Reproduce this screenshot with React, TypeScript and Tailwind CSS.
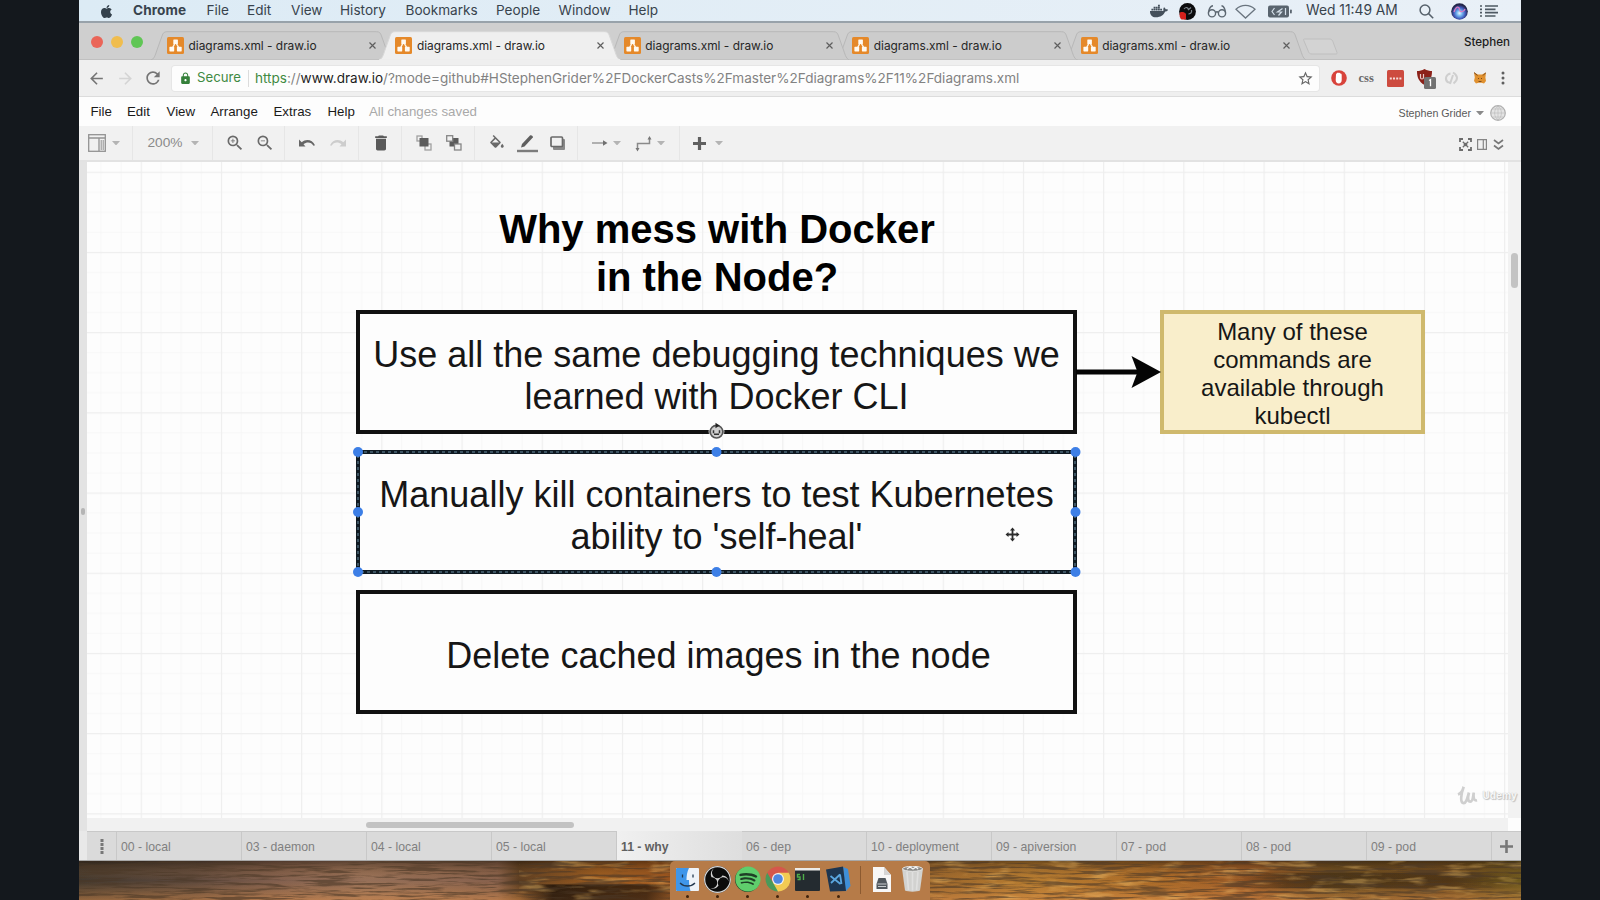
import type { ReactNode } from 'react';
import { FaApple, FaDocker, FaSpotify } from 'react-icons/fa';
import { SiObsstudio } from 'react-icons/si';
import {
  MdArrowBack,
  MdArrowForward,
  MdDelete,
  MdFormatColorFill,
  MdLock,
  MdRefresh,
  MdStarBorder,
  MdZoomIn,
  MdZoomOut,
} from 'react-icons/md';

/* ---------- macOS menu bar ---------- */

const systemMenus = [
  { label: 'Chrome', cls: 'w-[73.5px] font-bold tracking-[0.1px]' },
  { label: 'File', cls: 'w-[40.5px]' },
  { label: 'Edit', cls: 'w-[44px]' },
  { label: 'View', cls: 'w-[49px]' },
  { label: 'History', cls: 'w-[65.5px]' },
  { label: 'Bookmarks', cls: 'w-[90.5px]' },
  { label: 'People', cls: 'w-[62.5px]' },
  { label: 'Window', cls: 'w-[70px]' },
  { label: 'Help', cls: 'w-[40px]' },
];

function SystemBar() {
  return (
    <div className="flex h-[23px] shrink-0 items-center border-b-2 border-[#98a2aa] bg-linear-to-r from-[#dcebf5] to-[#e9f0f7] pt-px text-[13.6px] leading-none text-[#38434d]">
      <FaApple className="ml-[20px] mr-[19px] size-[15px] text-[#34414c]" />
      <div className="flex flex-1">
        {systemMenus.map((m) => (
          <span key={m.label} className={m.cls}>
            {m.label}
          </span>
        ))}
      </div>
      <FaDocker className="mr-[11px] size-[18px] text-[#44505b]" />
      <svg className="mr-[11px] size-[17px]" viewBox="0 0 17 17">
        <circle cx="8.5" cy="8.5" r="8.4" fill="#0c0c0e" />
        <path d="M5 6c2-2.500 4-1.500 4.500.5M12.500 7c.5 2.500-.8 4-3 3.800M9 7l3-2.500" fill="none" stroke="#7d858c" strokeWidth="1.200" />
        <path d="M1 9.500c2-1 4.500-.5 6 1.500v5.600H2.500C.5 15 .2 12 1 9.500z" fill="#d5201c" />
      </svg>
      <svg className="mr-[8px] h-[14px] w-[20px]" viewBox="0 0 20 14" fill="none" stroke="#5c6771" strokeWidth="1.400">
        <circle cx="5" cy="9.300" r="3.600" />
        <circle cx="15" cy="9.300" r="3.600" />
        <path d="M8.500 8.600c.8-.8 2.200-.8 3 0M1.400 8.500C2 5 3.500 2 6 1.800M18.600 8.500C18 5 16.500 2 14.500 1.800" />
      </svg>
      <svg className="mr-[12px] h-[15px] w-[21px]" viewBox="0 0 21 15" fill="none" stroke="#6a757f" strokeWidth="1.300">
        <path d="M1 5.200C6.500.2 14.500.2 20 5.200L10.500 14z" />
      </svg>
      <svg className="mr-[14px] h-[13px] w-[24px]" viewBox="0 0 24 13">
        <rect x="0" y="0.500" width="21" height="12" rx="2" fill="#59646e" />
        <rect x="22" y="4.500" width="1.800" height="4" rx="0.800" fill="#59646e" />
        <path d="M6.500 3L4 6.500 6.500 10M14.500 3.500L9.500 7h4l-3 3.500M17.500 3v7" fill="none" stroke="#d5e0ea" strokeWidth="1.200" />
      </svg>
      <span className="w-[92px] whitespace-nowrap text-[13.8px]">Wed 11:49 AM</span>
      <svg className="ml-[21px] size-[15px]" viewBox="0 0 15 15" fill="none" stroke="#56616b" strokeWidth="1.500">
        <circle cx="6" cy="6" r="4.900" />
        <path d="M9.600 9.600L14.200 14.200" />
      </svg>
      <svg className="ml-[17px] size-[17px]" viewBox="0 0 17 17">
        <defs>
          <radialGradient id="siri" cx="0.5" cy="0.6" r="0.5">
            <stop offset="0" stopColor="#e9f8ff" />
            <stop offset="0.35" stopColor="#6fb0ee" />
            <stop offset="0.7" stopColor="#3f56b8" />
            <stop offset="1" stopColor="#23264a" />
          </radialGradient>
        </defs>
        <circle cx="8.500" cy="8.500" r="8.300" fill="url(#siri)" />
        <path d="M3 9c2-6 5-6 5.500-2.500S13 9 14 6" fill="none" stroke="#d67ac0" strokeWidth="1.300" />
      </svg>
      <svg className="ml-[12px] mr-[22px] h-[12px] w-[19px]" viewBox="0 0 19 12" fill="none" stroke="#4e5963" strokeWidth="1.700">
        <path d="M5 1h13M5 4.300h10.500M5 7.600h13M5 11h10.500M0 1h2M0 4.300h2M0 7.600h2M0 11h2" />
      </svg>
    </div>
  );
}

/* ---------- Chrome tab strip ---------- */

const browserTabs = [
  { id: 1, z: 'z-[5]', active: false },
  { id: 2, z: 'z-[9]', active: true },
  { id: 3, z: 'z-[4]', active: false },
  { id: 4, z: 'z-[3]', active: false },
  { id: 5, z: 'z-[2]', active: false },
];

function DrawioIcon() {
  return (
    <svg className="size-[17px] shrink-0" viewBox="0 0 17 17">
      <rect width="17" height="17" rx="1.500" fill="#e5892a" />
      <path d="M8.500 5L5 12M8.500 5l4 7" stroke="#fdf3e4" strokeWidth="1.500" />
      <rect x="6.300" y="2.500" width="4.600" height="4.600" rx="0.600" fill="#fffaf2" />
      <rect x="2.400" y="9.800" width="4.800" height="4.600" rx="0.600" fill="#fffaf2" />
      <rect x="9.900" y="9.800" width="4.800" height="4.600" rx="0.600" fill="#fffaf2" />
    </svg>
  );
}

function BrowserTab({ z, active }: { z: string; active: boolean }) {
  return (
    <div className={`relative mr-[-13.1px] flex h-[29px] w-[241.5px] shrink-0 items-center pl-4 ${z}`}>
      <svg className="absolute inset-0 h-full w-full" viewBox="0 0 241.500 29" preserveAspectRatio="none">
        <path
          d="M0 29C3 28 4 25 6 19L11 5C12 2 13 .7 16 .7H225.500C228.500 .7 229.500 2 230.500 5L235.500 19C237.500 25 238.500 28 241.500 29Z"
          fill={active ? '#efefef' : '#cccccc'}
          stroke={active ? '#d8d8d8' : '#b8b8b8'}
          strokeWidth="1"
        />
        {active && <rect x="0.500" y="28.200" width="240.500" height="1" fill="#efefef" />}
      </svg>
      <div className="relative flex items-center">
        <DrawioIcon />
        <span className="ml-[4.5px] w-[132px] whitespace-nowrap text-[11.9px] text-[#262626]">diagrams.xml - draw.io</span>
        <svg className="ml-[48.5px] size-[7px]" viewBox="0 0 7 7" stroke="#5e5e5e" strokeWidth="1.200">
          <path d="M.5.500l6 6M6.500.500l-6 6" />
        </svg>
      </div>
    </div>
  );
}

function TabStrip() {
  return (
    <div className="flex h-[37px] shrink-0 items-end border-b border-[#c0c0c0] bg-[#cfcfcf]">
      <div className="flex h-full w-[72px] items-center gap-[8px] pl-[11.5px] pt-[1px]">
        <span className="size-[12px] rounded-full bg-[#ea6558]" />
        <span className="size-[12px] rounded-full bg-[#f0bd4e]" />
        <span className="size-[12px] rounded-full bg-[#60c655]" />
      </div>
      <div className="isolate -mb-px flex">
        {browserTabs.map((t) => (
          <BrowserTab key={t.id} z={t.z} active={t.active} />
        ))}
      </div>
      <svg className="mb-[4px] ml-[9px] h-[17px] w-[36px]" viewBox="0 0 36 17">
        <path d="M2.500 1h24.500c2 0 3 .5 3.800 2.300L35 14.500c.3 1-.2 1.500-1 1.500H10c-2 0-2.800-.6-3.500-2.300L1.800 2.500C1.400 1.500 1.600 1 2.500 1z" fill="#d3d3d3" stroke="#bfbfbf" />
      </svg>
      <span className="mb-[10px] ml-auto mr-[11px] text-[11.6px] font-medium leading-none text-[#1c1c1c]">Stephen</span>
    </div>
  );
}

/* ---------- Chrome address bar ---------- */

function AddressBar() {
  return (
    <div className="flex h-[37px] shrink-0 items-center border-b border-[#dcdcdc] bg-[#efefef]">
      <MdArrowBack className="ml-[8px] size-[19px] text-[#757575]" />
      <MdArrowForward className="ml-[10px] size-[19px] text-[#d4d4d4]" />
      <MdRefresh className="ml-[8px] size-[20px] text-[#757575]" />
      <div className="ml-[9px] flex h-[25px] w-[1147px] items-center rounded-[3px] bg-[#fdfdfd] shadow-[0_0_0_1px_#e6e6e6]">
        <MdLock className="ml-[7px] size-[13px] text-[#35803a]" />
        <span className="ml-[5px] w-[44px] text-[13.2px] text-[#3f8a42]">Secure</span>
        <span className="ml-[7px] h-[17px] w-px bg-[#dcdcdc]" />
        <span className="ml-[6px] flex-1 whitespace-nowrap text-[13.54px] text-[#828282]">
          <span className="text-[#3f8a42]">https</span>://<span className="text-[#1d1d1d]">www.draw.io</span>
          /?mode=github#HStephenGrider%2FDockerCasts%2Fmaster%2Fdiagrams%2F11%2Fdiagrams.xml
        </span>
        <MdStarBorder className="mr-[5px] size-[17px] text-[#666]" />
      </div>
      <svg className="ml-[11.5px] size-[16px]" viewBox="0 0 16 16">
        <circle cx="8" cy="8" r="7.800" fill="#d8433b" />
        <path d="M5 4.500c0-1 1-1 1.200-1.500.4-.8 1.300-.6 1.500 0 .9-.4 1.300 0 1.500.6.800 0 1.500.5 1.500 1.200v5.200c0 2.300-1.200 3.500-3 3.500S4.700 12 4.700 10z" fill="#fff" />
      </svg>
      <span className="ml-[12px] w-[17px] font-['Liberation_Serif',serif] text-[12.5px] font-bold leading-none text-[#6a6a6a]">css</span>
      <svg className="ml-[11px] size-[17px]" viewBox="0 0 17 17">
        <rect width="17" height="17" rx="1.500" fill="#cd4b3f" />
        <path d="M2.800 8.500h2M6 8.500h2M9.200 8.500h2M12.400 8.500h2" stroke="#f6dcd9" strokeWidth="2" />
      </svg>
      <svg className="ml-[12px] mt-[3px] h-[21px] w-[20px]" viewBox="0 0 20 21">
        <path d="M8.500 0C6 1.500 3.500 2 1 2c0 6 1.500 10.500 7.500 14C14.500 12.500 16 8 16 2c-2.500 0-5-.5-7.500-2z" fill="#8c2119" />
        <path d="M4.500 5v3.500c0 2 3 2 3 0V5" fill="none" stroke="#e9c9c6" strokeWidth="1.200" />
        <rect x="8" y="8" width="12" height="12" rx="1.500" fill="#727272" />
        <path d="M13 11.500l1.500-.8v6.500" fill="none" stroke="#fff" strokeWidth="1.300" />
      </svg>
      <svg className="ml-[8px] h-[15px] w-[15px]" viewBox="0 0 15 15" fill="none" stroke="#cfcfcf" strokeWidth="2">
        <path d="M6.500 2.500C2 3.500.5 8 3.500 11l2 .5M9 1.500c5 3 5.500 7 .5 11M6 13l3-9" />
      </svg>
      <svg className="ml-[15px] h-[12px] w-[12px]" viewBox="0 0 12 12">
        <path d="M0 .5l4 2h4l4-2-.6 5L12 9l-2 2.500-2.500-.8h-3L2 11.500 0 9l.8-3.500z" fill="#e0912f" />
        <path d="M4 6l1 1M8 6L7 7M0 .5l3.500 3M12 .5l-3 3M4.500 9.500h3" stroke="#7e4a1d" strokeWidth="1" />
      </svg>
      <svg className="ml-[15px] h-[14px] w-[4px]" viewBox="0 0 4 14" fill="#5e5e5e">
        <circle cx="2" cy="2" r="1.500" />
        <circle cx="2" cy="7" r="1.500" />
        <circle cx="2" cy="12" r="1.500" />
      </svg>
    </div>
  );
}

/* ---------- draw.io menu and toolbar ---------- */

const editorMenus = [
  { label: 'File', cls: 'w-[36.5px]' },
  { label: 'Edit', cls: 'w-[39.5px]' },
  { label: 'View', cls: 'w-[44px]' },
  { label: 'Arrange', cls: 'w-[63px]' },
  { label: 'Extras', cls: 'w-[54px]' },
  { label: 'Help', cls: 'w-[41.5px]' },
];

function EditorMenu() {
  return (
    <div className="flex h-[29px] shrink-0 items-center bg-[#fdfdfd] pl-[11.5px] font-['Liberation_Sans',sans-serif] text-[13.3px] leading-none text-[#1a1a1a]">
      {editorMenus.map((m) => (
        <span key={m.label} className={m.cls}>
          {m.label}
        </span>
      ))}
      <span className="text-[#a9a9a9]">All changes saved</span>
      <span className="ml-auto mr-[5px] mt-[3px] text-[10.7px] text-[#5a5a5a]">Stephen Grider</span>
      <Caret cls="mt-[3px] fill-[#8a8a8a]" />
      <svg className="ml-[6px] mr-[15px] mt-[2px] size-[16px]" viewBox="0 0 16 16" fill="none" stroke="#b0b0b0">
        <circle cx="8" cy="8" r="7.300" fill="#e4e4e4" strokeWidth="1.200" />
        <path d="M8 1v14M1 8h14M2.500 4h11M2.500 12h11M8 1C3.500 4 3.500 12 8 15M8 1c4.500 3 4.500 11 0 14" strokeWidth="0.500" />
      </svg>
    </div>
  );
}

function Caret({ cls = 'fill-[#b4b4b4]' }: { cls?: string }) {
  return (
    <svg className={`h-[4.5px] w-[8px] shrink-0 ${cls}`} viewBox="0 0 8 4.500">
      <path d="M0 0h8L4 4.500z" />
    </svg>
  );
}

function Group({ cls, children }: { cls: string; children: ReactNode }) {
  return <div className={`flex h-full shrink-0 items-center border-r border-[#e6e6e6] ${cls}`}>{children}</div>;
}

function EditorToolbar() {
  return (
    <div className="flex h-[36px] shrink-0 items-center border-b-2 border-[#e2e2e2] bg-[#f1f1f1] text-[#6a6a6a]">
      <Group cls="w-[54px] gap-[6px] pl-[9px]">
        <svg className="size-[18px]" viewBox="0 0 18 18" fill="none" stroke="#929292" strokeWidth="1.300">
          <rect x="0.700" y="0.700" width="16.600" height="16.600" />
          <path d="M.7 4h16.600M11 4v13" />
          <path d="M13.200 6v10M15.200 6v10" strokeWidth="1" />
        </svg>
        <Caret />
      </Group>
      <Group cls="w-[80px] pl-[14.5px]">
        <span className="w-[43px] font-['Liberation_Sans',sans-serif] text-[13.7px] leading-none text-[#8a8a8a]">200%</span>
        <Caret />
      </Group>
      <Group cls="w-[72px] gap-[10.5px] pl-[11.5px]">
        <MdZoomIn className="size-[20px]" />
        <MdZoomOut className="size-[20px]" />
      </Group>
      <Group cls="w-[74px] gap-[15px] pl-[14px]">
        <svg className="h-[8px] w-[16px]" viewBox="0 0 16 8">
          <path d="M0 .5v7h6.500L4.500 5.200C8 2.300 12.500 3 14.500 6.800l1.500-.6C13.500.8 7.300-.6 2.700 3.200z" fill="#666" />
        </svg>
        <svg className="h-[8px] w-[16px] -scale-x-100" viewBox="0 0 16 8">
          <path d="M0 .5v7h6.500L4.500 5.200C8 2.300 12.500 3 14.500 6.800l1.500-.6C13.500.8 7.300-.6 2.700 3.200z" fill="#cdcdcd" />
        </svg>
      </Group>
      <Group cls="w-[43px] pl-[12px]">
        <MdDelete className="size-[20px] text-[#5a5a5a]" />
      </Group>
      <Group cls="w-[73px] gap-[14px] pl-[14px]">
        <svg className="size-[16px]" viewBox="0 0 16 16">
          <rect x="9" y="9" width="6" height="6" fill="none" stroke="#a0a0a0" strokeWidth="1.300" />
          <rect x="1" y="1" width="5" height="5" fill="none" stroke="#a0a0a0" strokeWidth="1.300" />
          <rect x="3.500" y="3" width="9" height="8.500" fill="#5c5c5c" />
        </svg>
        <svg className="size-[16px]" viewBox="0 0 16 16">
          <rect x="3.500" y="3" width="9" height="8.500" fill="#5c5c5c" />
          <rect x="0.700" y="0.700" width="6" height="5.500" fill="#f1f1f1" stroke="#868686" strokeWidth="1.300" />
          <rect x="8.500" y="9" width="6.500" height="6" fill="#f1f1f1" stroke="#868686" strokeWidth="1.300" />
        </svg>
      </Group>
      <Group cls="w-[103px] pl-[13px]">
        <MdFormatColorFill className="size-[18px] translate-y-px [clip-path:inset(0_0_3px_0)]" />
        <svg className="ml-[11px] h-[19px] w-[21px]" viewBox="0 0 21 19">
          <path d="M4 13.500l1-3.500 8-8.500c1-1 3.500.5 2.800 2L7.500 12.500z" fill="#5f5f5f" />
          <path d="M0 17h21" stroke="#7c7c7c" strokeWidth="2.400" />
        </svg>
        <svg className="ml-[12px] h-[14px] w-[15px]" viewBox="0 0 15 14">
          <rect x="3" y="3" width="12" height="11" rx="1" fill="#8a8a8a" />
          <rect x="1" y="1" width="11.500" height="9.500" rx="1" fill="#f1f1f1" stroke="#6a6a6a" strokeWidth="1.700" />
        </svg>
      </Group>
      <Group cls="w-[102px] pl-[14px]">
        <svg className="h-[8px] w-[16px]" viewBox="0 0 16 8">
          <path d="M0 4h13" stroke="#9a9a9a" strokeWidth="1.500" />
          <path d="M11 1.300l4.500 2.700L11 6.700z" fill="#707070" />
        </svg>
        <Caret cls="ml-[5px] fill-[#b4b4b4]" />
        <svg className="ml-[14px] h-[17px] w-[17px]" viewBox="0 0 17 17" fill="none" stroke="#8a8a8a" strokeWidth="1.500">
          <path d="M2.500 14V8.500h12V4" />
          <path d="M.5 13h4l-2 3.500zM12.500 4.500h4L14.500 1z" fill="#777" stroke="none" />
        </svg>
        <Caret cls="ml-[5px] fill-[#b4b4b4]" />
      </Group>
      <svg className="ml-[12.5px] size-[13px]" viewBox="0 0 13 13" stroke="#606060" strokeWidth="3.200">
        <path d="M6.500 0v13M0 6.500h13" />
      </svg>
      <Caret cls="ml-[9px] fill-[#b4b4b4]" />
      <div className="ml-auto mr-[17px] flex items-center gap-[5px] pt-[3px]">
        <svg className="size-[13px]" viewBox="0 0 13 13" fill="none" stroke="#6c6c6c" strokeWidth="1.800">
          <path d="M1 4V1h3M9 1h3v3M12 9v3H9M4 12H1V9" />
          <path d="M3.800 3.800l5.400 5.400M9.200 3.800L3.800 9.200" strokeWidth="1.300" />
          <circle cx="6.500" cy="6.500" r="1.800" fill="#6c6c6c" stroke="none" />
        </svg>
        <svg className="h-[11px] w-[10px]" viewBox="0 0 10 11" fill="none" stroke="#858585" strokeWidth="1.200">
          <path d="M.6.600h8.800v9.800H.6zM6.300.600v9.800" />
        </svg>
        <svg className="ml-px h-[12px] w-[11px]" viewBox="0 0 11 12" fill="none" stroke="#777" strokeWidth="1.700">
          <path d="M1 1l4.500 3.500L10 1M1 6.500L5.500 10 10 6.500" />
        </svg>
      </div>
    </div>
  );
}

/* ---------- diagram ---------- */

const handles = [
  [271, 290],
  [629.5, 290],
  [988.5, 290],
  [271, 350],
  [988.5, 350],
  [271, 410],
  [629.5, 410],
  [988.5, 410],
];

function Diagram() {
  return (
    <div className="relative h-full w-[1421px] overflow-hidden bg-[#fdfdfd] font-['Liberation_Sans',sans-serif] text-[#161616]">
      <svg className="absolute inset-0 h-full w-full">
        <defs>
          <pattern id="grid" x="53.700" y="9.700" width="80.200" height="80.200" patternUnits="userSpaceOnUse">
            <path d="M20.500 0v80.200M40.500 0v80.200M60.600 0v80.200M0 20.500h80.200M0 40.500h80.200M0 60.600h80.200" stroke="#f7f7f7" strokeWidth="1" />
            <path d="M.6 0v80.200M0 .6h80.200" stroke="#eeeeee" strokeWidth="1.200" />
          </pattern>
        </defs>
        <rect width="100%" height="100%" fill="url(#grid)" />
      </svg>

      <div className="absolute left-[380px] top-[43px] w-[500px] text-center text-[40px] font-bold leading-[48px] text-black">
        Why mess with Docker
        <br />
        in the Node?
      </div>

      <div className="absolute left-[269px] top-[148px] flex h-[124px] w-[721px] items-center justify-center whitespace-nowrap border-4 border-[#111] bg-[#fdfdfd] pt-[7px] text-center text-[36px] leading-[42px]">
        Use all the same debugging techniques we
        <br />
        learned with Docker CLI
      </div>
      <div className="absolute left-[269px] top-[288px] flex h-[124px] w-[721px] items-center justify-center whitespace-nowrap border-4 border-[#0f1a22] bg-[#fdfdfd] pt-[7px] text-center text-[36px] leading-[42px]">
        Manually kill containers to test Kubernetes
        <br />
        ability to 'self-heal'
      </div>
      <div className="absolute left-[269px] top-[428px] flex h-[124px] w-[721px] items-center justify-center whitespace-nowrap border-4 border-[#111] bg-[#fdfdfd] pl-[4px] pt-[7px] text-center text-[36px] leading-[42px]">
        Delete cached images in the node
      </div>
      <div className="absolute left-[1073px] top-[148px] flex h-[124px] w-[265px] items-center justify-center border-4 border-[#cfb96d] bg-[#f9eecb] pt-[4px] text-center text-[24px] leading-[28px]">
        Many of these
        <br />
        commands are
        <br />
        available through
        <br />
        kubectl
      </div>

      <svg className="absolute inset-0 h-full w-full">
        <path d="M989 210h62" stroke="#050505" strokeWidth="5" />
        <path d="M1074 210l-29.500-16 6 16-6 16z" fill="#050505" />
        <rect x="271" y="290" width="717" height="120" fill="none" stroke="#6d8ea3" strokeWidth="1" strokeDasharray="3 3" />
        {handles.map(([cx, cy]) => (
          <circle key={`${cx}-${cy}`} cx={cx} cy={cy} r="5" fill="#3d7fe6" />
        ))}
        <g transform="translate(629.500 269.700)">
          <circle r="8" fill="#fdfdfd" fillOpacity="0.700" />
          <circle r="6.300" fill="#cfcfcf" stroke="#555" strokeWidth="1.700" />
          <path d="M-3-1.500v3M3-1.500v3M-2.500 2.500h5" stroke="#333" strokeWidth="1.500" fill="none" />
          <path d="M-1-9l4 2.700-4 2.800z" fill="#222" />
        </g>
        <g transform="translate(925.500 372.500)" fill="#2b2b2b" stroke="#2b2b2b">
          <path d="M0-5V5M-5 0H5" strokeWidth="1.800" />
          <path d="M0-7l2.600 3h-5.200zM0 7l2.600-3h-5.200zM-7 0l3-2.600v5.200zM7 0L4-2.600v5.200z" stroke="none" />
        </g>
      </svg>
    </div>
  );
}

function Workspace() {
  return (
    <div className="relative flex h-[669px] shrink-0 bg-[#e3e3e3]">
      <div className="flex w-[8px] shrink-0 items-center pt-[30px]">
        <span className="ml-[2px] h-[7px] w-[4px] rounded-sm bg-[#b5b5b5]" />
      </div>
      <div className="flex flex-1 flex-col">
        <div className="flex h-[656px]">
          <Diagram />
          <div className="flex-1 bg-[#f2f2f2] pt-[91px]">
            <div className="ml-[3px] h-[35px] w-[6.5px] rounded-full bg-[#c3c3c3]" />
          </div>
        </div>
        <div className="flex h-[13px]">
          <div className="w-[1421px] bg-[#f1f1f1] pl-[279px] pt-[3.5px]">
            <div className="h-[6px] w-[208px] rounded-full bg-[#c2c2c2]" />
          </div>
          <div className="flex-1 bg-[#fdfdfd]" />
        </div>
      </div>
      <div className="absolute bottom-[26px] right-[4px] flex items-center gap-[4px]">
        <svg className="h-[20px] w-[21px]" viewBox="0 0 22 21" fill="none" stroke="#cfcfcf" strokeWidth="2.800">
          <path d="M1 10c3-1 5-4 6-8-3 8-4 17 0 17 3 0 4-6 5.500-11-1.500 6-1 9.500 1.500 9.500S17 12 17.500 8c-.5 5 0 9 3.500 8" />
        </svg>
        <span className="text-[10px] font-bold leading-none text-[#f6f6f6] [text-shadow:0_0_1px_#b0b0b0,1px_1px_1px_#c2c2c2]">Udemy</span>
      </div>
    </div>
  );
}

const pages = [
  '00 - local',
  '03 - daemon',
  '04 - local',
  '05 - local',
  '11 - why',
  '06 - dep',
  '10 - deployment',
  '09 - apiversion',
  '07 - pod',
  '08 - pod',
  '09 - pod',
];

function PageTabs() {
  return (
    <div className="flex h-[30px] shrink-0 border-b border-[#a8a8a8] bg-[#e8e8e8] pl-[8px] font-['Liberation_Sans',sans-serif] text-[12.25px] text-[#808080]">
      <div className="flex w-[30px] shrink-0 items-center justify-center border-r border-t border-[#c8c8c8] bg-[#dadada]">
        <svg className="h-[15px] w-[4px]" viewBox="0 0 4 15" fill="#777">
          <path d="M.5 0h3v3h-3zM.5 4h3v3h-3zM.5 8h3v3h-3zM.5 12h3v3h-3z" />
        </svg>
      </div>
      {pages.map((p) =>
        p === '11 - why' ? (
          <div key={p} className="flex w-[125px] shrink-0 items-center bg-linear-to-r from-[#f0f0f0] to-[#dedede] pl-[4px] pt-[4px] font-bold text-[#606060]">
            {p}
          </div>
        ) : (
          <div key={p} className="flex w-[125px] shrink-0 items-center border-r border-t border-[#c8c8c8] bg-[#dadada] pl-[4px] pt-[3px]">
            {p}
          </div>
        ),
      )}
      <div className="flex flex-1 items-center justify-center border-t border-[#c8c8c8] bg-[#dadada]">
        <svg className="size-[13px]" viewBox="0 0 13 13" stroke="#777" strokeWidth="2.600">
          <path d="M6.500 0v13M0 6.500h13" />
        </svg>
      </div>
    </div>
  );
}

/* ---------- desktop and dock ---------- */

function Wallpaper() {
  return (
    <svg className="absolute inset-0 h-full w-full" preserveAspectRatio="none" viewBox="0 0 1442 40">
      <defs>
        <linearGradient id="sunset">
          <stop offset="0" stopColor="#41382f" />
          <stop offset="0.08" stopColor="#5c483d" />
          <stop offset="0.14" stopColor="#82604f" />
          <stop offset="0.2" stopColor="#967059" />
          <stop offset="0.29" stopColor="#86604c" />
          <stop offset="0.305" stopColor="#5a3c20" />
          <stop offset="0.36" stopColor="#9a5a1e" />
          <stop offset="0.41" stopColor="#9a521c" />
          <stop offset="0.58" stopColor="#96622a" />
          <stop offset="0.66" stopColor="#b67c30" />
          <stop offset="0.74" stopColor="#ac6c28" />
          <stop offset="0.81" stopColor="#9c5a26" />
          <stop offset="0.87" stopColor="#6a4c1e" />
          <stop offset="0.95" stopColor="#6d491c" />
          <stop offset="1" stopColor="#6c581c" />
        </linearGradient>
        <linearGradient id="glow" x1="0" y1="0" x2="0" y2="1">
          <stop offset="0" stopColor="#140c04" stopOpacity="0.45" />
          <stop offset="0.5" stopColor="#c08040" stopOpacity="0" />
          <stop offset="1" stopColor="#e2924c" stopOpacity="0.5" />
        </linearGradient>
        <linearGradient id="shore">
          <stop offset="0" stopColor="#000" stopOpacity="0" />
          <stop offset="0.2" stopColor="#120b06" stopOpacity="0.75" />
          <stop offset="0.75" stopColor="#120b06" stopOpacity="0.65" />
          <stop offset="1" stopColor="#000" stopOpacity="0" />
        </linearGradient>
        <filter id="water" x="0" y="0" width="100%" height="100%">
          <feTurbulence type="fractalNoise" baseFrequency="0.022 0.35" numOctaves="4" seed="7" />
          <feColorMatrix values="0 0 0 0 0.07  0 0 0 0 0.04  0 0 0 0 0.02  5 0 0 0 -2.3" />
        </filter>
        <filter id="ripple" x="0" y="0" width="100%" height="100%">
          <feTurbulence type="fractalNoise" baseFrequency="0.03 0.12" numOctaves="3" seed="3" />
          <feColorMatrix values="0 0 0 0 0.9  0 0 0 0 0.55  0 0 0 0 0.16  0 4 0 0 -2.1" />
        </filter>
      </defs>
      <rect width="1442" height="40" fill="url(#sunset)" />
      <rect width="1442" height="40" fill="url(#glow)" />
      <rect x="440" y="24" width="170" height="16" fill="url(#shore)" />
      <rect x="1150" y="12" width="292" height="16" fill="url(#shore)" opacity="0.5" />
      <rect x="440" width="1002" height="40" filter="url(#ripple)" opacity="0.4" />
      <rect width="1442" height="40" filter="url(#water)" opacity="0.6" />
    </svg>
  );
}

function DockItem({ children, running = true }: { children: ReactNode; running?: boolean }) {
  return (
    <div className="flex w-[30.1px] shrink-0 flex-col items-center">
      <div className="flex h-[34px] items-center justify-center pt-[2px]">{children}</div>
      {running && <span className="size-[3px] rounded-full bg-[#3f220c]" />}
    </div>
  );
}

function Dock() {
  return (
    <div className="relative flex h-[39px] w-[260px] rounded-t-[5px] bg-[#b67b48] pl-[2.5px]">
      <DockItem>
        <svg className="h-[23px] w-[23px]" viewBox="0 0 23 23">
          <rect width="23" height="23" rx="1" fill="#eef3f8" />
          <path d="M0 1a1 1 0 011-1h12c-2 4-2.500 8-2.500 12H13c0 4 .5 8 1.500 11H1a1 1 0 01-1-1z" fill="#3f96ea" />
          <path d="M6.500 6.500v3M17 6.500v3M4 15c4 4 11 4 15 0" stroke="#23384e" strokeWidth="1.300" fill="none" />
        </svg>
      </DockItem>
      <DockItem>
        <span className="flex size-[27px] items-center justify-center rounded-full bg-[#0b0b0b]">
          <SiObsstudio className="size-[27px] text-[#d4d4d4]" />
        </span>
      </DockItem>
      <DockItem>
        <span className="flex size-[25px] items-center justify-center rounded-full bg-[#1e3f26]">
          <FaSpotify className="size-[26px] shrink-0 text-[#5fce6c]" />
        </span>
      </DockItem>
      <DockItem>
        <svg className="size-[26px]" viewBox="-13 -13 26 26">
          <path d="M0 0L-10.800-6.250A12.500 12.500 0 0110.800-6.250z" fill="#d6574b" />
          <path d="M0 0L10.800-6.250A12.500 12.500 0 010 12.500z" fill="#f2cb53" />
          <path d="M0 0L0 12.500A12.500 12.500 0 01-10.800-6.250z" fill="#4a9a5a" />
          <path d="M0-6.250h10.800L5.400 3.100zM-5.400 3.100L0 12.500 5.400 3.100z" fill="#f2cb53" />
          <path d="M-10.800-6.250L-5.400 3.100 0-6z" fill="#d6574b" />
          <circle r="6" fill="#f3f3f3" />
          <circle r="4.800" fill="#4f87e0" />
        </svg>
      </DockItem>
      <DockItem>
        <svg className="h-[23px] w-[25px]" viewBox="0 0 25 23">
          <rect width="25" height="23" rx="1" fill="#242b30" />
          <rect width="25" height="2.500" fill="#ecebe8" />
          <path d="M5 6.500H2.500v2.500H5v2.500H2.500M8.500 6v6" stroke="#4fae4a" strokeWidth="1.400" fill="none" />
        </svg>
      </DockItem>
      <DockItem>
        <svg className="h-[26px] w-[25px]" viewBox="0 0 25 26">
          <path d="M17 1l5 2 2.500 17-5 5.500z" fill="#3f8fd8" />
          <path d="M0 3.500L17 .5l3 24.500-16 .5z" fill="#1d3550" />
          <path d="M4.500 10l10 8M14 8.500L5 17M14 8.500l1.500 9.500" stroke="#5aa6e0" strokeWidth="1.800" fill="none" />
        </svg>
      </DockItem>
      <span className="ml-[7px] mr-[6px] mt-[5px] h-[28px] w-px bg-[#8c5a30]" />
      <DockItem running={false}>
        <svg className="h-[25px] w-[18px]" viewBox="0 0 18 25">
          <path d="M0 0h11l7 8v17H0z" fill="#f7f7f7" />
          <path d="M11 0l7 8h-7z" fill="#d5d5d5" />
          <path d="M5.500 11h7l2 6v5h-11v-5z" fill="#50575d" />
          <path d="M4.500 17h9M5 19.500h8" stroke="#c9cdd0" strokeWidth="1" />
        </svg>
      </DockItem>
      <DockItem running={false}>
        <svg className="h-[26px] w-[21px]" viewBox="0 0 21 26">
          <path d="M0 2.500h21l-3 22c-3 1.500-12 1.500-15 0z" fill="#d2d2d0" />
          <path d="M5 6l1.500 18M10.500 6v18.500M16 6l-1.500 18" stroke="#e0e0df" strokeWidth="1.600" />
          <ellipse cx="10.500" cy="2.800" rx="10" ry="2.500" fill="#8a8a88" stroke="#e7e7e6" strokeWidth="1" />
          <path d="M5 3l3-2 3 2 3-2 2 2" stroke="#f4f4f4" strokeWidth="1.400" fill="none" />
        </svg>
      </DockItem>
    </div>
  );
}

export default function App() {
  return (
    <div className="flex h-[900px] w-[1600px] justify-center overflow-hidden bg-[#14181d] font-[Inter,sans-serif]">
      <div className="flex w-[1442px] flex-col overflow-hidden">
        <SystemBar />
        <TabStrip />
        <AddressBar />
        <EditorMenu />
        <EditorToolbar />
        <Workspace />
        <PageTabs />
        <div className="relative flex h-[39px] shrink-0 justify-center">
          <Wallpaper />
          <Dock />
        </div>
      </div>
    </div>
  );
}
